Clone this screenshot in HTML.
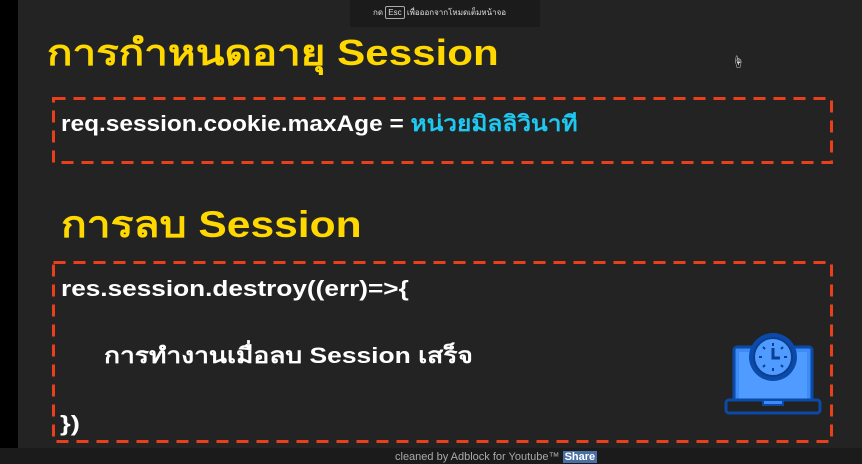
<!DOCTYPE html>
<html><head><meta charset="utf-8"><style>
*{margin:0;padding:0;box-sizing:border-box}
body{width:862px;height:464px;background:#232323;position:relative;overflow:hidden;font-family:"Liberation Sans","Noto Sans CJK SC",sans-serif}
.abs{position:absolute;white-space:nowrap;transform-origin:0 0}
.w{color:#fff;font-weight:bold;font-size:22px}
.y{color:#ffd800;font-weight:bold}
</style></head><body>
<div class="abs" style="left:0;top:0;width:18px;height:464px;background:#000"></div>
<div class="abs" style="left:350px;top:0;width:190px;height:27px;background:#1b1b1b"></div>
<div class="abs" style="left:373px;top:6px;font-size:8px;color:#ddd;line-height:14px">กด <span style="border:1px solid #aaa;padding:1px 2px;border-radius:2px">Esc</span> เพื่อออกจากโหมดเต็มหน้าจอ</div>
<div class="abs y" style="left:47px;top:31px;font-size:36px;line-height:44px;transform:scaleX(1.17)">การกำหนดอายุ Session</div>
<svg class="abs" style="left:0;top:0" width="862" height="464">
<g fill="none" stroke="#e8401c" stroke-width="3" stroke-dasharray="12 8">
<rect x="53.5" y="98.5" width="778" height="64"/>
<rect x="53.5" y="262.5" width="778" height="179"/>
</g></svg>
<div class="abs w" style="left:61px;top:110px;line-height:28px;transform:scaleX(1.11)">req.session.cookie.maxAge = <span style="color:#1ec8f0">หน่วยมิลลิวินาที</span></div>
<div class="abs y" style="left:61px;top:202px;font-size:37px;line-height:46px;transform:scaleX(1.15)">การลบ Session</div>
<div class="abs w" style="left:61px;top:275px;line-height:28px;transform:scaleX(1.19)">res.session.destroy((err)=>{</div>
<div class="abs w" style="left:104px;top:342px;line-height:28px;transform:scaleX(1.2)">การทำงานเมื่อลบ Session เสร็จ</div>
<div class="abs w" style="left:60px;top:410px;line-height:28px;transform:scaleX(1.25)">})</div>
<svg class="abs" style="left:720px;top:330px" width="105" height="90" viewBox="0 0 105 90">
<rect x="14" y="17" width="78" height="62" rx="3" fill="#3d8bf5" stroke="#0b4aa8" stroke-width="3"/>
<rect x="19" y="22" width="68" height="50" fill="#4f9bff"/>
<rect x="6" y="70" width="94" height="13" rx="3" fill="#222" stroke="#0b4aa8" stroke-width="3"/>
<rect x="43" y="70" width="20" height="5" fill="#3d8bf5" stroke="#0b4aa8" stroke-width="2"/>
<circle cx="53" cy="27" r="24" fill="#0b4aa8"/>
<circle cx="53" cy="27" r="19" fill="#4f9bff" stroke="#0b3f90" stroke-width="2"/>
<path d="M53 13v3M53 38v3M39 27h3M64 27h3M43 17l2 2M63 17l-2 2M43 37l2-2M63 37l-2-2" stroke="#0b3f90" stroke-width="2"/>
<path d="M53 18v10h7" fill="none" stroke="#0b3f90" stroke-width="3"/>
</svg>
<div class="abs" style="left:0;top:448px;width:862px;height:16px;background:#1b1b1b"></div>
<div class="abs" style="left:395px;top:450px;font-size:11px;color:#aaa;line-height:14px">cleaned by Adblock for Youtube™ <span style="background:#4a6fa5;color:#fff;font-weight:bold;padding:0 2px">Share</span></div>
<div class="abs" style="left:732px;top:53px;font-size:12px;color:#fff">☝</div>
</body></html>
